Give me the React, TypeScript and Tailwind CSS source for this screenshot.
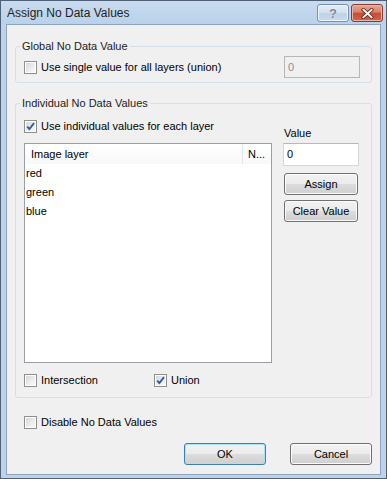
import type { ReactNode } from 'react';

const font = { fontFamily: '"Liberation Sans", Arial, sans-serif' };

function CheckBox({ checked = false }: { checked?: boolean }) {
  return (
    <span className="relative flex h-[13px] w-[13px] shrink-0 border border-[#8f8f8f] bg-white p-px">
      <span className="block h-full w-full bg-[linear-gradient(135deg,#d6d8db_0%,#eceef0_60%,#f8f8f8_100%)]" />
      {checked && (
        <svg className="absolute left-0 top-0" width="11" height="11" viewBox="0 0 11 11">
          <path d="M2.2 5.6 L4.4 8 L9 2.2" fill="none" stroke="#3d55a0" strokeWidth="1.9" />
        </svg>
      )}
    </span>
  );
}

function CheckRow({ checked, children }: { checked?: boolean; children: ReactNode }) {
  return (
    <div className="flex h-[16px] items-center gap-[4px]">
      <CheckBox checked={checked} />
      <span>{children}</span>
    </div>
  );
}

function Button({ children, primary, className = '' }: { children: ReactNode; primary?: boolean; className?: string }) {
  return (
    <button
      className={`flex h-[22px] items-center justify-center rounded-[3px] border text-[11px] text-black ${
        primary
          ? 'border-[#3c7fb1] bg-[linear-gradient(to_bottom,#f2f2f2_0%,#ebebeb_50%,#dddddd_50%,#cfcfcf_100%)] shadow-[inset_0_0_0_1px_#a7e3f7]'
          : 'border-[#707070] bg-[linear-gradient(to_bottom,#f2f2f2_0%,#ebebeb_50%,#dddddd_50%,#cfcfcf_100%)] shadow-[inset_0_0_0_1px_#fbfbfb]'
      } ${className}`}
      style={font}
    >
      {children}
    </button>
  );
}

function GroupBox({ title, children, className = '' }: { title: string; children: ReactNode; className?: string }) {
  return (
    <fieldset className={`min-w-0 rounded-[3px] border border-[#d5dfe5] ${className}`}>
      <legend className="ml-[4px] px-[2px] text-[11px] leading-[14px] text-[#1c1c1c]">{title}</legend>
      {children}
    </fieldset>
  );
}

const rows = ['red', 'green', 'blue'];

export default function App() {
  return (
    <div
      className="flex h-[479px] w-[387px] flex-col border border-[#4f6178] bg-[#bdd3ec] text-[11px] text-black"
      style={font}
    >
      {/* title bar */}
      <div className="flex h-[23px] items-start bg-[linear-gradient(to_bottom,#c9dbef,#b9d1ea)] pr-[3px]">
        <div className="mt-[5px] pl-[6px] text-[12px] leading-[15px] text-[#1e1e1e]">Assign No Data Values</div>
        <div className="ml-auto mt-[3px] flex gap-[2px]">
          <div className="flex h-[18px] w-[32px] items-center justify-center rounded-[3px] border border-[#7890b0] bg-[linear-gradient(to_bottom,#e4edf7_0%,#d2e0f0_50%,#bfd2ea_50%,#c8d9ee_100%)] shadow-[inset_0_0_0_1px_#eef4fb]">
            <span className="text-[13px] font-bold leading-none text-[#7c8898] [text-shadow:0_0_1px_#ffffff]">?</span>
          </div>
          <div className="flex h-[18px] w-[32px] items-center justify-center rounded-[3px] border border-[#8a3b2e] bg-[linear-gradient(to_bottom,#e8a696_0%,#d9806c_45%,#c74c34_50%,#d3644a_100%)] shadow-[inset_0_0_0_1px_#eab5a8]">
            <svg width="13" height="11" viewBox="0 0 13 11">
              <path d="M2.5 1.8 L10.5 9.2 M10.5 1.8 L2.5 9.2" stroke="#6e2418" strokeWidth="3.6" strokeLinecap="square" />
              <path d="M2.5 1.8 L10.5 9.2 M10.5 1.8 L2.5 9.2" stroke="#ffffff" strokeWidth="2" strokeLinecap="square" />
            </svg>
          </div>
        </div>
      </div>

      {/* client area */}
      <div className="mx-[5px] mb-[3px] flex flex-1 flex-col border border-[#8ea3bd] bg-[#f0f0f0] px-[8px]">
        <GroupBox title="Global No Data Value" className="mt-[14px]">
          <div className="mb-[4px] mt-[3px] flex h-[22px] items-center pl-[8px] pr-[11px]">
            <CheckRow>Use single value for all layers (union)</CheckRow>
            <div className="ml-auto flex h-[22px] w-[76px] items-center border border-[#b4b8bc] bg-[#f0f0f0] pl-[3px] text-[#8d8d8d]">
              0
            </div>
          </div>
        </GroupBox>

        <GroupBox title="Individual No Data Values" className="mt-[13px]">
          <div className="flex pb-[9px] pl-[8px]">
            <div className="flex w-[248px] flex-col">
              <div className="mt-[8px]">
                <CheckRow checked>Use individual values for each layer</CheckRow>
              </div>
              <div className="mt-[9px] flex h-[220px] flex-col border border-[#9a9fa6] bg-white">
                <div className="flex h-[20px] items-stretch bg-[linear-gradient(to_bottom,#ffffff,#f7f8f9)]">
                  <div className="flex w-[218px] items-center border-r border-[#e3e5e8] pl-[6px]">Image layer</div>
                  <div className="flex items-center pl-[5px]">N...</div>
                </div>
                {rows.map((r) => (
                  <div key={r} className="flex h-[19px] items-center pl-[1px]">
                    {r}
                  </div>
                ))}
              </div>
              <div className="mt-[9px] flex">
                <div className="w-[130px]">
                  <CheckRow>Intersection</CheckRow>
                </div>
                <CheckRow checked>Union</CheckRow>
              </div>
            </div>

            <div className="ml-[11px] flex w-[76px] flex-col">
              <div className="mt-[16px] pl-[1px] leading-[14px]">Value</div>
              <div className="mt-[3px] flex h-[23px] items-center border border-[#d3d7dc] border-t-[#b5b9be] bg-white pl-[3px]">
                0
              </div>
              <Button className="ml-px mt-[7px] w-[74px]">Assign</Button>
              <Button className="ml-px mt-[5px] w-[74px]">Clear Value</Button>
            </div>
          </div>
        </GroupBox>

        <div className="mt-[16px] pl-[9px]">
          <CheckRow>Disable No Data Values</CheckRow>
        </div>

        <div className="mt-[13px] flex justify-end gap-[24px]">
          <Button primary className="w-[82px]">OK</Button>
          <Button className="w-[82px]">Cancel</Button>
        </div>
      </div>
    </div>
  );
}
